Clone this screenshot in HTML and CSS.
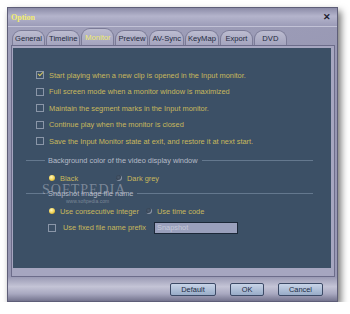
FILE: index.html
```html
<!DOCTYPE HTML>
<html>
<head>
    <meta charset="utf-8">
    <title>Option</title>
    <link rel="stylesheet" href="styles.css">
</head>
<body>
    <div class="window">
        <div class="titlebar">
            <span class="title">Option</span>
            <span class="close">&#x2715;</span>
        </div>
        <div class="tabs">
            <div class="tab">General</div>
            <div class="tab">Timeline</div>
            <div class="tab active">Monitor</div>
            <div class="tab">Preview</div>
            <div class="tab">AV-Sync</div>
            <div class="tab">KeyMap</div>
            <div class="tab">Export</div>
            <div class="tab">DVD</div>
        </div>
        <div class="frame">
            <div class="panel">
                <div class="checks">
                    <div class="row"><span class="box checked"></span>Start playing when a new clip is opened in the Input monitor.</div>
                    <div class="row"><span class="box"></span>Full screen mode when a monitor window is maximized</div>
                    <div class="row"><span class="box"></span>Maintain the segment marks in the Input monitor.</div>
                    <div class="row"><span class="box"></span>Continue play when the monitor is closed</div>
                    <div class="row"><span class="box"></span>Save the Input Monitor state at exit, and restore it at next start.</div>
                </div>

                <div class="group first">
                    <span class="line short"></span>
                    <span class="group-title">Background color of the video display window</span>
                    <span class="line"></span>
                </div>
                <div class="opts">
                    <div class="opt wide"><span class="radio on"></span>Black</div>
                    <div class="opt"><span class="radio"></span>Dark grey</div>
                </div>

                <div class="group">
                    <span class="line short"></span>
                    <span class="group-title">Snapshot image file name</span>
                    <span class="line"></span>
                    <span class="watermark">SOFTPEDIA<small>www.softpedia.com</small></span>
                </div>
                <div class="opts">
                    <div class="opt wider"><span class="radio on"></span>Use consecutive integer</div>
                    <div class="opt"><span class="radio"></span>Use time code</div>
                </div>
                <div class="opts prefix">
                    <div class="opt"><span class="box"></span>Use fixed file name prefix</div>
                    <input type="text" class="field" value="Snapshot" disabled>
                </div>
            </div>
        </div>
        <div class="buttons">
            <div class="btn default">Default</div>
            <div class="btn ok">OK</div>
            <div class="btn cancel">Cancel</div>
        </div>
    </div>
</body>
</html>
```

FILE: styles.css
```css
html, body{
    margin: 0;
    background: #ffffff;
}
body{
    font-family: "Liberation Sans", Arial, sans-serif;
    font-size: 7.4px;
    padding: 7px 0 0 7px;
}
.window{
    width: 331px;
    height: 295px;
    box-sizing: border-box;
    border: 1px solid #5e5e78;
    background: linear-gradient(160deg, #a2a2bc, #9696b2 50%, #9a9ab6);
    box-shadow: 3px 4px 7px rgba(0, 0, 0, 0.55);
    display: flex;
    flex-direction: column;
}
.titlebar{
    height: 18px;
    display: flex;
    align-items: center;
    justify-content: space-between;
    padding: 0 6px 0 3px;
    background: linear-gradient(#8c8ca8, #b4b4cc 45%, #9c9cb8);
    border-bottom: 1px solid #c2c2d6;
}
.title{
    font-family: "Liberation Serif", serif;
    font-weight: bold;
    font-size: 8px;
    color: #f2ec6e;
}
.close{
    font-size: 9px;
    font-weight: bold;
    color: #202030;
}
.tabs{
    height: 18px;
    display: flex;
    align-items: flex-end;
    padding-left: 4px;
}
.tab{
    min-width: 33px;
    height: 15px;
    line-height: 15px;
    padding: 0 2px;
    margin-right: 1px;
    text-align: center;
    font-size: 7.6px;
    color: #1e2a40;
    background: linear-gradient(#bcbcd0, #a4a4be);
    border: 1px solid #7c7c98;
    border-bottom: none;
    border-radius: 9px 9px 0 0;
    box-sizing: border-box;
}
.tab.active{
    color: #f2ec6e;
    height: 17px;
    line-height: 17px;
}
.frame{
    margin: 0 2px 0 3px;
    height: 232px;
    box-sizing: border-box;
    border: 1px solid #6c6c8a;
    background: #a6a6c0;
    padding: 2px 3px 8px 1px;
}
.panel{
    height: 100%;
    box-sizing: border-box;
    background: #3c5066;
    padding-top: 19px;
    display: flex;
    flex-direction: column;
    color: #c8b85c;
}
.checks{
    padding-left: 23px;
}
.row{
    height: 16.5px;
    display: flex;
    align-items: center;
    white-space: nowrap;
}
.box{
    width: 6px;
    height: 6px;
    border: 1px solid #8a96a8;
    margin-right: 5px;
    flex: none;
    position: relative;
}
.box.checked::after{
    content: "";
    position: absolute;
    left: 1px;
    top: 0;
    width: 4px;
    height: 2px;
    border-left: 1.5px solid #d8c860;
    border-bottom: 1.5px solid #d8c860;
    transform: rotate(-45deg);
}
.group{
    height: 12px;
    margin: 5px 18px 0 13px;
    display: flex;
    align-items: center;
    position: relative;
}
.group + .opts{
    margin-top: 3px;
}
.line{
    flex: 1;
    height: 1px;
    background: #64788e;
}
.line.short{
    flex: none;
    width: 19px;
}
.group-title{
    color: #b6bcc8;
    padding: 0 4px 0 3px;
    white-space: nowrap;
}
.opts{
    height: 17px;
    display: flex;
    align-items: center;
    padding-left: 36px;
}
.group:not(.first){
    margin-top: 1px;
}
.opt{
    display: flex;
    align-items: center;
    white-space: nowrap;
    flex: none;
}
.opt.wide{
    width: 67px;
}
.opt.wider{
    width: 97px;
}
.radio{
    width: 6px;
    height: 6px;
    border-radius: 50%;
    margin-right: 5px;
    background: radial-gradient(circle at 40% 40%, #4c5c70, #1e2a38);
    box-shadow: inset -1px -1px 0 #8a96a8;
}
.radio.on{
    background: radial-gradient(circle at 40% 35%, #fff8c0, #f0d050 55%, #a08020);
    box-shadow: none;
}
.prefix{
    height: 16px;
}
.prefix .box{
    margin-left: -1px;
    margin-right: 7px;
}
.field{
    width: 84px;
    height: 12px;
    box-sizing: border-box;
    margin: 0 0 0 8px;
    padding: 0 2px;
    border: 1px solid #1c2838;
    background: #9aa0bc;
    color: #c4c8d8;
    font: 7.4px "Liberation Sans", Arial, sans-serif;
}
.watermark{
    position: absolute;
    left: 16px;
    top: -6px;
    font-family: "Liberation Serif", serif;
    font-size: 14px;
    letter-spacing: 1px;
    color: rgba(200, 205, 215, 0.45);
    pointer-events: none;
}
.watermark small{
    display: block;
    font-family: "Liberation Sans", sans-serif;
    font-size: 5px;
    letter-spacing: 0;
    margin: 0 0 0 24px;
}
.buttons{
    flex: 1;
    display: flex;
    align-items: center;
    justify-content: flex-end;
    padding-right: 14px;
    gap: 14px;
    background: linear-gradient(#9a9ab4, #c4c4d6 40%, #a8a8c0 70%, #74748e);
}
.btn{
    height: 13px;
    line-height: 11px;
    box-sizing: border-box;
    text-align: center;
    color: #1c2a44;
    border: 1px solid #3c4a66;
    border-radius: 2px;
    background: linear-gradient(#c8d4e8, #98acc8);
}
.btn.default{
    width: 46px;
}
.btn.ok{
    width: 34px;
}
.btn.cancel{
    width: 45px;
}
```
